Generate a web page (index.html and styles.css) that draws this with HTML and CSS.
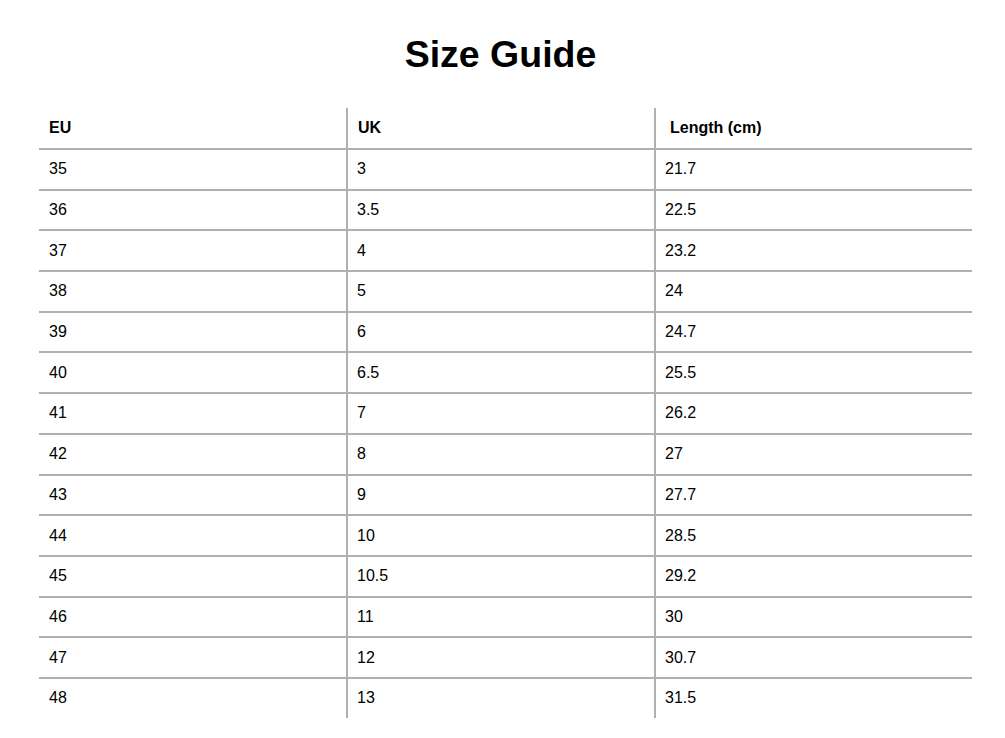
FILE: index.html
```html
<!DOCTYPE html>
<html lang="en">
<head>
<meta charset="utf-8">
<title>Size Guide</title>
<link rel="stylesheet" href="styles.css">
</head>
<body>
<h1 class="title">Size Guide</h1>
<div class="size-table">
  <div class="cell head">EU</div>
  <div class="cell head col">UK</div>
  <div class="cell head col wide">Length (cm)</div>

  <div class="cell">35</div><div class="cell col">3</div><div class="cell col">21.7</div>
  <div class="cell">36</div><div class="cell col">3.5</div><div class="cell col">22.5</div>
  <div class="cell">37</div><div class="cell col">4</div><div class="cell col">23.2</div>
  <div class="cell">38</div><div class="cell col">5</div><div class="cell col">24</div>
  <div class="cell">39</div><div class="cell col">6</div><div class="cell col">24.7</div>
  <div class="cell">40</div><div class="cell col">6.5</div><div class="cell col">25.5</div>
  <div class="cell">41</div><div class="cell col">7</div><div class="cell col">26.2</div>
  <div class="cell">42</div><div class="cell col">8</div><div class="cell col">27</div>
  <div class="cell">43</div><div class="cell col">9</div><div class="cell col">27.7</div>
  <div class="cell">44</div><div class="cell col">10</div><div class="cell col">28.5</div>
  <div class="cell">45</div><div class="cell col">10.5</div><div class="cell col">29.2</div>
  <div class="cell">46</div><div class="cell col">11</div><div class="cell col">30</div>
  <div class="cell">47</div><div class="cell col">12</div><div class="cell col">30.7</div>
  <div class="cell last">48</div><div class="cell col last">13</div><div class="cell col last">31.5</div>
</div>
</body>
</html>
```

FILE: styles.css
```css
html, body {
  margin: 0;
  padding: 0;
  background: #ffffff;
}

body {
  font-family: "Liberation Sans", Arial, sans-serif;
  color: #000000;
}

.title {
  margin: 33px 0 0;
  padding-right: 4px;
  font-size: 37.5px;
  line-height: 42px;
  font-weight: bold;
  text-align: center;
  color: #000000;
}

.size-table {
  display: grid;
  grid-template-columns: 307px 308px 318px;
  grid-template-rows: 42px repeat(13, 40.69px) 38.69px;
  margin: 33px 0 0 39px;
  width: 933px;
}

.cell {
  display: flex;
  align-items: center;
  box-sizing: border-box;
  padding-left: 10px;
  font-size: 16px;
  border-bottom: 2px solid #b0b0b0;
}

.cell.col {
  border-left: 2px solid #b0b0b0;
  padding-left: 9px;
}

.cell.head {
  font-weight: bold;
}

.cell.head.col {
  padding-left: 10px;
}

.cell.head.wide {
  padding-left: 14px;
}

.cell.last {
  border-bottom: none;
}
```
